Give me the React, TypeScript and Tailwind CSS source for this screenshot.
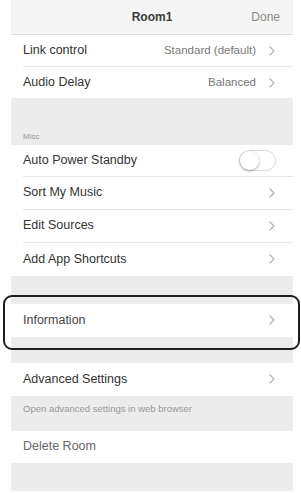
import React from "react";

const Chevron = () => (
  <svg width="6" height="10" viewBox="0 0 6 10" className="shrink-0">
    <polyline points="1,1 5,5 1,9" fill="none" stroke="#b5b5b5" strokeWidth="1.3" strokeLinecap="round" strokeLinejoin="round" />
  </svg>
);

function Row({
  label,
  value,
  chevron = true,
  divider = true,
  h = "h-[32px]",
  labelClass = "text-[#333]",
  right,
}: {
  label: string;
  value?: string;
  chevron?: boolean;
  divider?: boolean;
  h?: string;
  labelClass?: string;
  right?: React.ReactNode;
}) {
  return (
    <div className={`bg-white pl-[12px] ${h}`}>
      <div className={`flex h-full items-center pr-[18px] ${divider ? "border-b border-[#e6e6e6]" : ""}`}>
        <span className={`flex-1 text-[12.5px] ${labelClass}`}>{label}</span>
        {value && <span className="mr-[13px] text-[11.5px] text-[#777]">{value}</span>}
        {right}
        {chevron && <Chevron />}
      </div>
    </div>
  );
}

export default function App() {
  return (
    <div className="w-[301px] h-[493px] bg-white overflow-hidden" style={{ fontFamily: '"Liberation Sans", Arial, sans-serif' }}>
      <div className="ml-[11px] w-[282px] flex flex-col">
        {/* header */}
        <div className="relative flex h-[35px] items-center justify-center border-b border-[#dcdcdc] bg-[#f5f5f5]">
          <span className="text-[12px] font-semibold text-[#3a3a3a]">Room1</span>
          <span className="absolute right-[13px] text-[12px] text-[#8a8a8a]">Done</span>
        </div>
        <Row label="Link control" value="Standard (default)" />
        <Row label="Audio Delay" value="Balanced" divider={false} h="h-[31px]" />
        <div className="flex h-[47px] flex-col justify-end bg-[#ececec] px-[12px] pb-[4px]">
          <span className="block text-[8px] leading-none text-[#999]">Misc</span>
        </div>
        <Row
          label="Auto Power Standby"
          chevron={false}
          h="h-[32px]"
          right={
            <div className="mr-[-1px] h-[21px] w-[37px] rounded-full border border-[#dadada] bg-white">
              <div className="h-[19px] w-[19px] rounded-full bg-white shadow-[0_1px_3px_rgba(0,0,0,0.35)]" />
            </div>
          }
        />
        <Row label="Sort My Music" h="h-[32.5px]" />
        <Row label="Edit Sources" h="h-[33px]" />
        <Row label="Add App Shortcuts" h="h-[33px]" divider={false} />
        <div className="relative">
          <div className="h-[28px] bg-[#ececec]" />
          <Row label="Information" h="h-[33px]" divider={false} labelClass="text-[#444]" />
          <div className="h-[26px] bg-[#ececec]" />
          <div className="absolute left-[-8px] right-[-7px] top-[19px] h-[55px] rounded-[9px] border-2 border-[#1e1e1e]" />
        </div>
        <Row label="Advanced Settings" h="h-[33px]" divider={false} />
        <div className="h-[35px] bg-[#ececec] px-[12px] pt-[8px]">
          <span className="block text-[9.5px] leading-none text-[#999]">Open advanced settings in web browser</span>
        </div>
        <Row label="Delete Room" chevron={false} divider={false} h="h-[32px]" labelClass="text-[#666]" />
        <div className="h-[28px] bg-[#ececec]" />
      </div>
    </div>
  );
}
